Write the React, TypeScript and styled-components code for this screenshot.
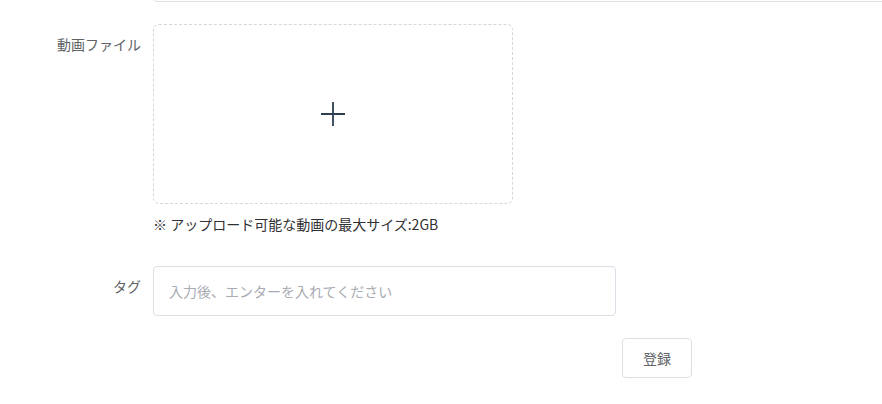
import React from "react";
import styled, { createGlobalStyle } from "styled-components";

const GlobalStyle = createGlobalStyle`
  html, body {
    margin: 0;
    padding: 0;
    overflow: hidden;
    background: #ffffff;
  }
  body {
    font-family: "Helvetica Neue", "Liberation Sans", "Noto Sans CJK JP", sans-serif;
    font-size: 14px;
    color: #606266;
  }
`;

const Page = styled.div`
  width: 920px;
  height: 404px;
  overflow: hidden;
`;

const Form = styled.form`
  display: flex;
  flex-direction: column;
  margin-top: -38px;
`;

const FormItem = styled.div`
  display: flex;
  align-items: flex-start;
  margin-bottom: 22px;
`;

const Label = styled.label`
  flex: 0 0 153px;
  box-sizing: border-box;
  padding-right: 12px;
  text-align: right;
  line-height: 40px;
  min-height: 40px;
  font-size: 14px;
  color: #606266;
  font-family: "Noto Sans CJK JP", sans-serif;
`;

const Content = styled.div<{ $full?: boolean }>`
  display: flex;
  flex-direction: column;
  flex: ${(p) => (p.$full ? "1 1 auto" : "0 0 auto")};
  line-height: 40px;
`;

const TextInput = styled.input<{ $h: number; $w?: number }>`
  box-sizing: border-box;
  height: ${(p) => p.$h}px;
  width: ${(p) => (p.$w ? `${p.$w}px` : "100%")};
  padding: 0 15px;
  border: 1px solid #dcdfe6;
  border-radius: 4px;
  outline: none;
  font-size: 14px;
  font-family: "Noto Sans CJK JP", sans-serif;
  color: #606266;
  background: #fff;
  &::placeholder {
    color: #a8abb2;
  }
`;

const Uploader = styled.div`
  box-sizing: border-box;
  width: 360px;
  height: 180px;
  border: 1px dashed #d4d7de;
  border-radius: 6px;
  display: flex;
  align-items: center;
  justify-content: center;
  cursor: pointer;
`;

const Note = styled.div`
  line-height: 40px;
  font-size: 14px;
  color: #303133;
  font-family: "Noto Sans CJK JP", sans-serif;
  white-space: nowrap;
`;

const Footer = styled.div`
  display: flex;
  justify-content: flex-end;
  width: 692px;
`;

const Button = styled.button`
  box-sizing: border-box;
  height: 40px;
  width: 70px;
  padding: 0;
  border: 1px solid #dcdfe6;
  border-radius: 4px;
  background: #fff;
  font-size: 14px;
  color: #606266;
  font-family: "Noto Sans CJK JP", sans-serif;
  cursor: pointer;
`;

const PlusIcon = () => (
  <svg width="26" height="26" viewBox="0 0 26 26">
    <path d="M1 13H25M13 1V25" stroke="#2c3e50" strokeWidth="1.8" fill="none" />
  </svg>
);

export default function App() {
  return (
    <Page>
      <GlobalStyle />
      <Form onSubmit={(e) => e.preventDefault()}>
        <FormItem>
          <Label />
          <Content $full>
            <TextInput $h={40} aria-label="タイトル" />
          </Content>
        </FormItem>
        <FormItem>
          <Label>動画ファイル</Label>
          <Content>
            <Uploader>
              <PlusIcon />
            </Uploader>
            <Note>※ アップロード可能な動画の最大サイズ:2GB</Note>
          </Content>
        </FormItem>
        <FormItem>
          <Label>タグ</Label>
          <Content>
            <TextInput $h={50} $w={463} placeholder="入力後、エンターを入れてください" />
          </Content>
        </FormItem>
        <Footer>
          <Button type="submit">登録</Button>
        </Footer>
      </Form>
    </Page>
  );
}
